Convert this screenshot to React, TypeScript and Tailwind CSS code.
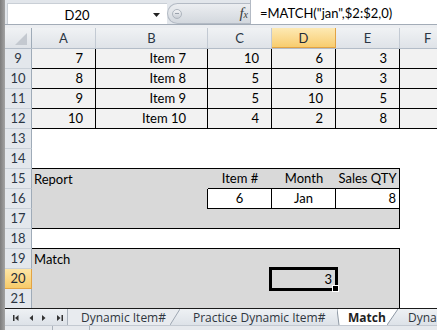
import React, { ReactNode } from 'react';

function RowHead({ n, sel, last }: { n: number; sel?: boolean; last?: boolean }) {
  if (sel)
    return (
      <div className="w-[27px] shrink-0 h-full border-r border-b border-[#e2a344] bg-gradient-to-b from-[#fde6a6] to-[#f7ca68] text-center leading-[19px] text-[#1f2a36]">
        {n}
      </div>
    );
  return (
    <div
      className={`w-[27px] shrink-0 h-full border-r border-r-[#9fabb8] ${
        last ? 'leading-[19px]' : 'border-b border-b-[#c9d0d8] leading-[19px]'
      } bg-[#e3e7ec] text-center text-[#2b3644]`}
    >
      {n}
    </div>
  );
}

function Row({ n, sel, last, children }: { n: number; sel?: boolean; last?: boolean; children?: ReactNode }) {
  return (
    <div className={`${last ? 'h-[19px]' : 'h-[20px]'} flex shrink-0`}>
      <RowHead n={n} sel={sel} last={last} />
      {children}
    </div>
  );
}

const data: [number, string, number, number, number][] = [
  [7, 'Item 7', 10, 6, 3],
  [8, 'Item 8', 5, 8, 3],
  [9, 'Item 9', 5, 10, 5],
  [10, 'Item 10', 4, 2, 8],
];

function ColHead({ l, sel }: { l: string; sel?: boolean }) {
  if (sel)
    return (
      <div className="w-[64px] shrink-0 h-full border-r border-l-0 border-b border-[#e2a344] bg-gradient-to-b from-[#fde9b3] to-[#f8cd6e] text-center leading-[20px] text-[#1f2a36]">
        {l}
      </div>
    );
  return (
    <div className="w-[64px] shrink-0 h-full border-r border-[#c3cad3] text-center leading-[20px] text-[#2b3644]">
      {l}
    </div>
  );
}

export default function App() {
  return (
    <div className="w-[437px] h-[330px] overflow-hidden flex bg-white font-[family-name:Lato,sans-serif] text-[13px] text-black">
      <div className="w-[5px] shrink-0 bg-gradient-to-r from-[#7d7d7d] to-[#a3a3a3]" />
      <div className="flex-1 min-w-0 flex flex-col">
        {/* formula bar */}
        <div className="h-[25px] shrink-0 flex border-b border-[#a3acb7] bg-[#e2e6eb]">
          <div className="w-[2px] shrink-0" />
          <div className="mt-[3px] w-[160px] shrink-0 bg-white flex items-center border-l border-t border-[#c9cfd6]">
            <span className="w-[138px] text-center leading-[20px] pt-[1px]">D20</span>
            <svg width="8" height="5" viewBox="0 0 8 5" className="ml-[7px] mt-[2px]">
              <polygon points="0,0 7,0 3.5,4" fill="#222" />
            </svg>
          </div>
          <div className="mt-[3px] w-[83px] shrink-0 rounded-l-full bg-gradient-to-b from-[#eceef1] to-[#d3d8de] border border-r-0 border-[#b3bac4] flex items-center justify-between">
            <div className="ml-[4px] w-[10px] h-[10px] rounded-full bg-gradient-to-b from-[#f4f5f7] to-[#c9ced5] border border-[#aeb5be] flex items-center justify-center">
              <div className="w-[4px] h-[1px] bg-[#9aa2ac]" />
            </div>
            <span className="mr-[2px] font-[family-name:'Liberation_Serif',serif] italic text-[#3a3a3a] leading-none">
              <span className="text-[15px]">f</span>
              <span className="text-[10px]">x</span>
            </span>
          </div>
          <div className="flex-1 bg-white border-l border-[#b3bac4] pl-[9px] pt-[3px] leading-[21px] whitespace-nowrap overflow-hidden">
            =MATCH("jan",$2:$2,0)
          </div>
        </div>
        {/* band */}
        <div className="h-[3px] shrink-0 bg-[#eceef1]" />
        {/* column headers */}
        <div className="h-[21px] shrink-0 flex border-b border-[#b3bcc7] bg-gradient-to-b from-[#f0f2f4] to-[#dfe3e8]">
          <div className="w-[27px] shrink-0 h-full border-r border-[#9fabb8]">
            <svg width="26" height="20" viewBox="0 0 26 20">
              <polygon points="22,5 22,17 10,17" fill="#c4c9d0" />
            </svg>
          </div>
          <ColHead l="A" />
          <div className="w-[112px] shrink-0 h-full border-r border-[#c3cad3] text-center leading-[20px] text-[#2b3644]">B</div>
          <ColHead l="C" />
          <ColHead l="D" sel />
          <ColHead l="E" />
          <div className="flex-1 h-full leading-[20px] text-[#2b3644] pl-[24px]">F</div>
        </div>

        {/* data rows */}
        {data.map((r, i) => (
          <Row key={i} n={9 + i}>
            <div className="w-[64px] shrink-0 bg-[#f2f2f2] border-r border-b border-black text-right pr-[12px] leading-[19px]">{r[0]}</div>
            <div className="w-[112px] shrink-0 bg-[#f2f2f2] border-r border-b border-black text-right pr-[21px] leading-[19px]">{r[1]}</div>
            <div className="w-[64px] shrink-0 bg-[#f2f2f2] border-r border-b border-black text-right pr-[12px] leading-[19px]">{r[2]}</div>
            <div className="w-[64px] shrink-0 bg-[#f2f2f2] border-r border-b border-black text-right pr-[12px] leading-[19px]">{r[3]}</div>
            <div className="w-[64px] shrink-0 bg-[#f2f2f2] border-r border-b border-black text-right pr-[12px] leading-[19px]">{r[4]}</div>
            <div className="flex-1 bg-[#f2f2f2] border-b border-black" />
          </Row>
        ))}

        <Row n={13}>
          <div className="flex-1 bg-white" />
        </Row>
        <Row n={14}>
          <div className="w-[368px] shrink-0 border-b border-black" />
          <div className="flex-1" />
        </Row>
        <Row n={15}>
          <div className="w-[64px] shrink-0 bg-[#d9d9d9] pl-[2px] leading-[20px] whitespace-nowrap">Report</div>
          <div className="w-[112px] shrink-0 bg-[#d9d9d9]" />
          <div className="w-[64px] shrink-0 bg-[#d9d9d9] border-b border-black text-center leading-[19px]">Item #</div>
          <div className="w-[64px] shrink-0 bg-[#d9d9d9] border-b border-black text-center leading-[19px]">Month</div>
          <div className="w-[64px] shrink-0 bg-[#d9d9d9] border-b border-r border-black text-center leading-[19px] whitespace-nowrap">Sales QTY</div>
          <div className="flex-1" />
        </Row>
        <Row n={16}>
          <div className="w-[64px] shrink-0 bg-[#d9d9d9]" />
          <div className="w-[112px] shrink-0 bg-[#d9d9d9] border-r border-black" />
          <div className="w-[64px] shrink-0 bg-white border-r border-b border-black text-center leading-[19px]">6</div>
          <div className="w-[64px] shrink-0 bg-white border-r border-b border-black text-center leading-[19px]">Jan</div>
          <div className="w-[64px] shrink-0 bg-white border-r border-b border-black text-right pr-[3px] leading-[19px]">8</div>
          <div className="flex-1" />
        </Row>
        <Row n={17}>
          <div className="w-[368px] shrink-0 bg-[#d9d9d9] border-b border-r border-black" />
          <div className="flex-1" />
        </Row>
        <Row n={18}>
          <div className="w-[368px] shrink-0 border-b border-black" />
          <div className="flex-1" />
        </Row>
        <Row n={19}>
          <div className="w-[368px] shrink-0 bg-[#d9d9d9] border-r border-black pl-[2px] leading-[20px]">Match</div>
          <div className="flex-1" />
        </Row>
        <Row n={20} sel>
          <div className="w-[240px] shrink-0 bg-[#d9d9d9]" />
          <div className="w-[64px] shrink-0 bg-[#d9d9d9] relative text-right pr-[4px] leading-[20px]">
            3
            <div className="absolute -left-[3px] -top-[2px] -right-[2px] -bottom-[2px] border-[3px] border-black" />
            <div className="absolute -right-[3px] -bottom-[3px] w-[7px] h-[7px] bg-black border border-white" />
          </div>
          <div className="w-[64px] shrink-0 bg-[#d9d9d9] border-r border-black" />
          <div className="flex-1" />
        </Row>
        <Row n={21} last>
          <div className="w-[368px] shrink-0 bg-[#d9d9d9] border-r border-black" />
          <div className="flex-1" />
        </Row>

        {/* sheet tabs */}
        <div className="h-[17px] shrink-0 flex border-t border-[#1a1a1a] bg-gradient-to-b from-[#eef1f4] to-[#dde2e8] font-[family-name:'Open_Sans',sans-serif] text-[12px] text-[#2f3640] whitespace-nowrap overflow-hidden">
          <div className="w-[63px] shrink-0 border-r border-[#a9b1bb]">
            <svg width="62" height="16" viewBox="0 0 62 16">
              <rect x="8" y="6" width="1.5" height="6" fill="#333" />
              <polygon points="13.5,6 13.5,12 10,9" fill="#333" />
              <polygon points="28,6 28,12 24.5,9" fill="#333" />
              <polygon points="37,6 37,12 40.5,9" fill="#333" />
              <polygon points="52,6 52,12 55.5,9" fill="#333" />
              <rect x="56.5" y="6" width="1.5" height="6" fill="#333" />
            </svg>
          </div>
          <div className="w-[102px] shrink-0 pl-[13px] pt-[1px] leading-[15px] bg-[#e8ebef]">Dynamic Item#</div>
          <svg width="10" height="16" viewBox="0 0 10 16" className="shrink-0">
            <polygon points="0,0 10,0 0,16" fill="#e8ebef" />
            <line x1="0" y1="16" x2="10" y2="0" stroke="#9ea7b2" strokeWidth="1" />
          </svg>
          <div className="w-[157px] shrink-0 pl-[13px] pt-[1px] leading-[15px]">Practice Dynamic Item#</div>
          <svg width="5" height="16" viewBox="0 0 5 16" className="shrink-0">
            <polygon points="0,0 5,0 5,16 2,16" fill="#ffffff" />
            <line x1="0" y1="0" x2="2" y2="16" stroke="#8e98a4" strokeWidth="1" />
          </svg>
          <div className="w-[45px] shrink-0 bg-white pl-[6px] pt-[1px] leading-[15px] font-bold text-[#1f1f1f]">Match</div>
          <svg width="11" height="16" viewBox="0 0 11 16" className="shrink-0">
            <polygon points="0,0 11,0 0,16" fill="#ffffff" />
            <line x1="0" y1="16" x2="11" y2="0" stroke="#8e98a4" strokeWidth="1" />
          </svg>
          <div className="flex-1 pl-[10px] pt-[1px] leading-[15px]">Dyna</div>
        </div>
        <div className="flex-1 flex bg-[#e6e9ed] border-t border-[#c3c9d1]">
          <div className="w-[48px] shrink-0 border-r border-[#aab2bc]" />
          <div className="w-[37px] shrink-0 border-r border-[#aab2bc]" />
        </div>
      </div>
    </div>
  );
}
